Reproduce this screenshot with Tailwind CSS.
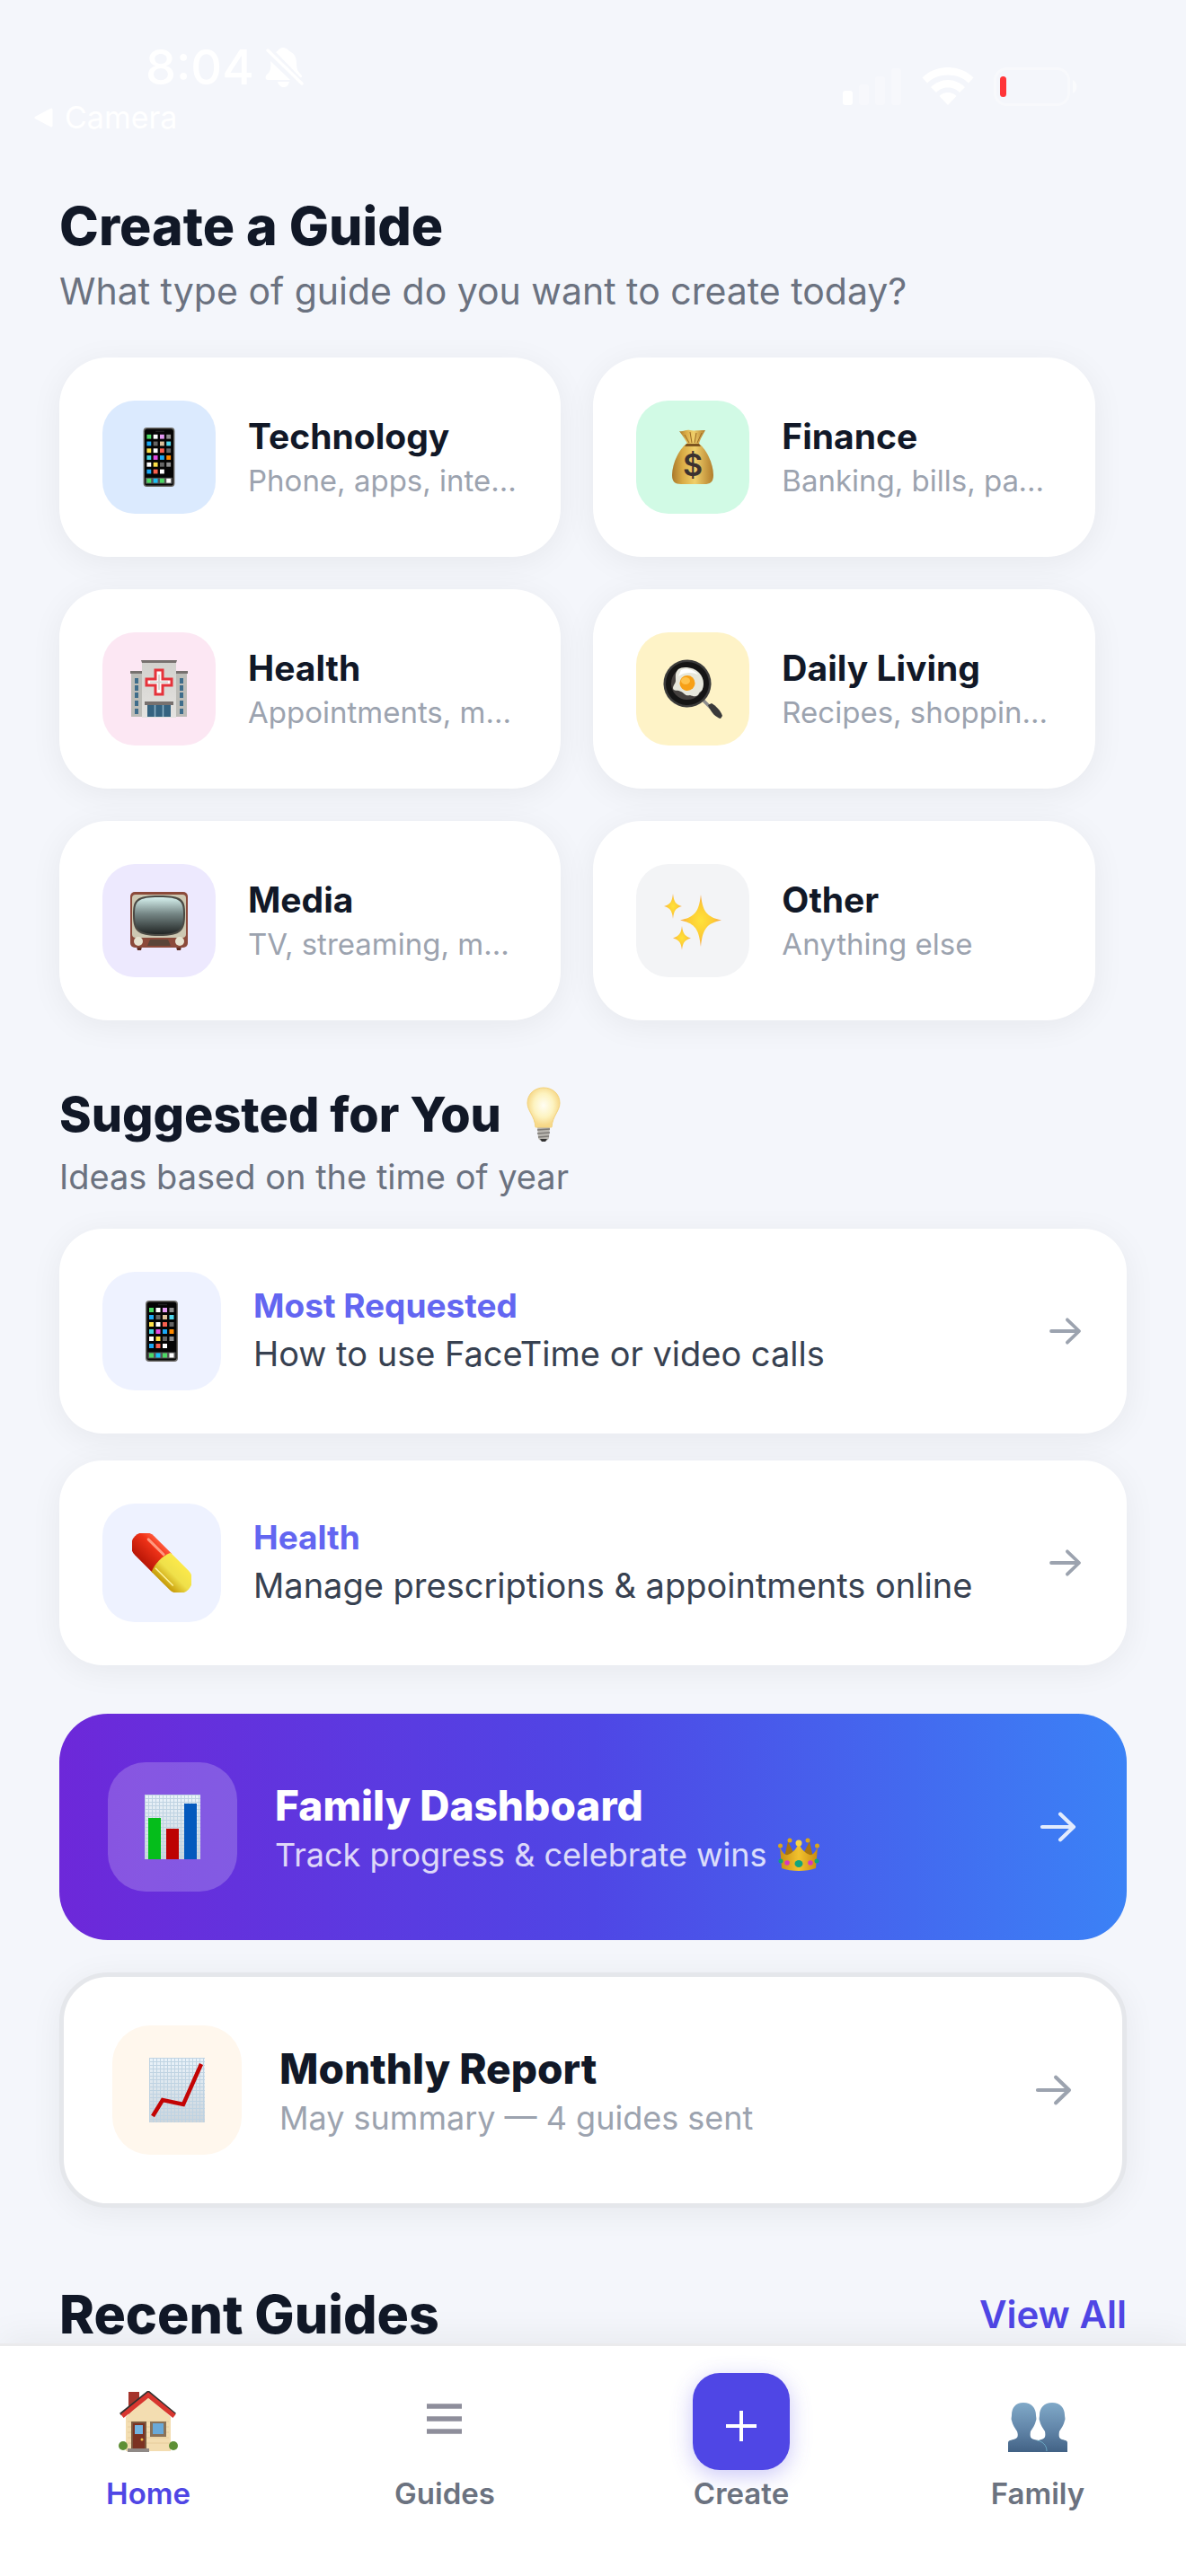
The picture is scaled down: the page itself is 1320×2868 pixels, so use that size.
<!DOCTYPE html>
<html lang="en">
<head>
<meta charset="utf-8">
<meta name="viewport" content="width=device-width, initial-scale=1">
<title>Create a Guide</title>
<script src="https://cdn.jsdelivr.net/npm/@tailwindcss/browser@4"></script>
</head>
<body class="flex min-h-screen flex-col bg-[#f4f6fb] font-['Inter',sans-serif] text-[#111827]">

<!-- Shared icons -->
<svg class="absolute size-0" aria-hidden="true">
  <defs>
    <linearGradient id="gold" x1="0" x2="1"><stop offset="0" stop-color="#a9782a"/><stop offset=".25" stop-color="#d9ab45"/><stop offset=".55" stop-color="#f0cf6a"/><stop offset="1" stop-color="#b27d2b"/></linearGradient>
    <linearGradient id="wall" x1="0" x2="0" y1="0" y2="1"><stop offset="0" stop-color="#d2d1cd"/><stop offset="1" stop-color="#e4e3e0"/></linearGradient>
    <linearGradient id="tube" x1="0" x2="0" y1="0" y2="1"><stop offset="0" stop-color="#d6f1ee"/><stop offset=".45" stop-color="#758685"/><stop offset="1" stop-color="#222625"/></linearGradient>
    <radialGradient id="star"><stop offset="0" stop-color="#ffe23a"/><stop offset=".6" stop-color="#fdcb35"/><stop offset="1" stop-color="#f7a34a"/></radialGradient>
    <linearGradient id="pillred" x1="0" x2="0" y1="0" y2="1"><stop offset="0" stop-color="#ff5a3c"/><stop offset=".3" stop-color="#ef3218"/><stop offset="1" stop-color="#b81606"/></linearGradient>
    <linearGradient id="pillyellow" x1="0" x2="0" y1="0" y2="1"><stop offset="0" stop-color="#fbe94a"/><stop offset=".5" stop-color="#efe04a"/><stop offset="1" stop-color="#c79a08"/></linearGradient>
    <linearGradient id="paper" x1="0" x2="0" y1="0" y2="1"><stop offset="0" stop-color="#eaf3fa"/><stop offset="1" stop-color="#ccd5dc"/></linearGradient>
    <pattern id="grid" width="4" height="4" patternUnits="userSpaceOnUse"><path d="M0 .5h4M.5 0v4" stroke="#bfd3e2" stroke-width="1"/></pattern>
    <linearGradient id="people" x1="0" x2="0" y1="0" y2="1"><stop offset="0" stop-color="#80a9c8"/><stop offset=".5" stop-color="#6488ab"/><stop offset="1" stop-color="#426285"/></linearGradient>
    <radialGradient id="glow" cx=".5" cy=".45"><stop offset="0" stop-color="#fffef4"/><stop offset=".6" stop-color="#fdf3c0"/><stop offset="1" stop-color="#f7d98a"/></radialGradient>
    <linearGradient id="crown" x1="0" x2="1"><stop offset="0" stop-color="#c98f12"/><stop offset=".5" stop-color="#f2c22e"/><stop offset="1" stop-color="#c98a10"/></linearGradient>
  </defs>
  <symbol id="phone" viewBox="0 0 36 68">
    <rect width="36" height="68" rx="4" fill="#6b6965"/><rect x="1.500" y="1.500" width="33" height="65" rx="3" fill="#050505"/>
    <path d="M14 4.500h10" stroke="#222" stroke-width="1.500"/>
    <g><path fill="#4cd964" d="M4 8h5v5H4z"/><path fill="#fff" d="M11.500 8h5v5h-5z"/><path fill="#e59bf5" d="M19 8h5v5h-5z"/><path fill="#8e8e8e" d="M26.500 8h5v5h-5z"/>
    <path fill="#1ba8f5" d="M4 16h5v5H4z"/><path fill="#666" d="M11.500 16h5v5h-5z"/><path fill="#dcc09a" d="M19 16h5v5h-5z"/><path fill="#50d6ea" d="M26.500 16h5v5h-5z"/>
    <path fill="#fde047" d="M4 24h5v5H4z"/><path fill="#fff" d="M11.500 24h5v5h-5z"/><path fill="#f8604f" d="M19 24h5v5h-5z"/><path fill="#666" d="M26.500 24h5v5h-5z"/>
    <path fill="#42d3df" d="M4 32h5v5H4z"/><path fill="#e34be0" d="M11.500 32h5v5h-5z"/><path fill="#1ba8f5" d="M19 32h5v5h-5z"/><path fill="#ff8a00" d="M26.500 32h5v5h-5z"/>
    <path fill="#fff" d="M4 40h5v5H4z"/><path fill="#fde047" d="M11.500 40h5v5h-5z"/><path fill="#666" d="M19 40h5v5h-5z"/><path fill="#8e8e8e" d="M26.500 40h5v5h-5z"/>
    <path fill="#1ba8f5" d="M4 48h5v5H4z"/><path fill="#f8604f" d="M11.500 48h5v5h-5z"/><path fill="#fff" d="M19 48h5v5h-5z"/></g>
    <path d="M2.500 57.500h31v7h-31z" fill="#555"/>
    <path fill="#4cd964" d="M4 58.500h5v5H4z"/><path fill="#1bc0f5" d="M11.500 58.500h5v5h-5z"/><path fill="#4cd964" d="M19 58.500h5v5h-5z"/><path fill="#fff" d="M26.500 58.500h5v5h-5z"/>
  </symbol>
  <symbol id="arrow" viewBox="0 0 40 34">
    <path d="M3 17h32M22 3.500 36 17 22 30.500" fill="none" stroke="currentColor" stroke-width="4" stroke-linecap="round" stroke-linejoin="round"/>
  </symbol>
</svg>

<!-- Status bar -->
<header class="flex h-[216px] items-start justify-between text-white">
  <div>
    <div class="mt-[44px] ml-[162px] flex items-center gap-[12px]">
      <span class="text-[54px] leading-[62px] font-medium">8:04</span>
      <svg class="h-[46px] w-[44px]" viewBox="0 0 44 46" aria-label="Silent mode"><path d="M12 6c3-1 3-5 8-5s6 4 9 5c5 3 6 8 6 13 0 6 2 9 5 12 2 2 1 4-1 3z" fill="#fff"/><path d="M6 16 28 37H3c-3 0-3-4-1-6 4-3 5-8 4-15zM14 39h13c-1 4-3 6-6 6s-6-2-7-6z" fill="#fff"/><path d="M3 4l38 37" stroke="#fff" stroke-width="3.500" stroke-linecap="round"/></svg>
    </div>
    <a href="#camera" class="mt-[4px] ml-[38px] flex items-center gap-[12px] text-[34px] leading-[42px]">
      <svg class="h-[22px] w-[22px]" viewBox="0 0 22 22" aria-hidden="true"><path d="M19 2v18L2 11z" fill="#fff" stroke="#fff" stroke-width="3" stroke-linejoin="round"/></svg>
      Camera
    </a>
  </div>
  <div class="mt-[74px] mr-[120px] flex items-center gap-[22px]">
    <svg class="h-[44px] w-[66px]" viewBox="0 0 66 44" aria-label="Signal, one bar"><g fill="#fff"><rect y="27" width="11" height="16" rx="3"/><g opacity=".3"><rect x="18" y="20" width="11" height="23" rx="3"/><rect x="36" y="11" width="11" height="32" rx="3"/><rect x="54" y="2" width="11" height="41" rx="3"/></g></g></svg>
    <svg class="h-[44px] w-[58px]" viewBox="0 0 58 44" aria-label="Wi-Fi"><g fill="#fff"><path d="M29 1c11 0 21 4 28.500 11.500L52 18.500C46 12.500 38 9.500 29 9.500S12 12.500 6 18.500L.5 12.500C8 5 18 1 29 1z"/><path d="M29 15c7 0 14 3 19 8l-6 6c-4-4-8-5.500-13-5.500S20 25 16 29l-6-6c5-5 12-8 19-8z"/><path d="M29 29c4 0 7 1.500 9.500 4L29 43l-9.500-10c2.500-2.500 5.500-4 9.500-4z"/></g></svg>
    <svg class="h-[44px] w-[94px]" viewBox="0 0 94 44" aria-label="Battery low"><rect x="1.500" y="2.500" width="82" height="40" rx="13" fill="none" stroke="#fff" stroke-opacity=".4" stroke-width="3"/><path d="M88 15c6 2 6 13 0 15z" fill="#fff" fill-opacity=".5"/><rect x="7" y="11" width="7" height="23" rx="3.500" fill="#ff3538"/></svg>
  </div>
</header>

<main class="flex flex-1 flex-col px-[66px]">
  <h1 class="text-[59px] leading-[72px] font-extrabold">Create a Guide</h1>
  <p class="mt-[8px] text-[41px] leading-[56px] text-[#6b7280]">What type of guide do you want to create today?</p>

  <div class="mt-[46px] grid grid-cols-[47%_47%] gap-[36px]">
    <a href="#technology" class="flex items-center gap-[36px] rounded-[54px] bg-white p-[48px] shadow-[0_6px_36px_rgba(0,0,0,0.06)]">
      <span class="flex size-[126px] shrink-0 items-center justify-center rounded-[36px] bg-[#dbeafe]"><svg class="h-[66px] w-[36px]" aria-hidden="true"><use href="#phone"/></svg></span>
      <span class="flex min-w-0 flex-col gap-[4px]"><span class="text-[39px] leading-[48px] font-bold">Technology</span><span class="truncate text-[33px] leading-[42px] text-[#9ca3af]">Phone, apps, internet</span></span>
    </a>
    <a href="#finance" class="flex items-center gap-[36px] rounded-[54px] bg-white p-[48px] shadow-[0_6px_36px_rgba(0,0,0,0.06)]">
      <span class="flex size-[126px] shrink-0 items-center justify-center rounded-[36px] bg-[#d1fae5]">
        <svg class="size-[66px]" viewBox="0 0 66 66" aria-hidden="true"><path d="M18 4c5 1 7-2 12-1s8 0 17 0c-2 4-5 8-7 15H27c-3-6-6-10-9-14z" fill="url(#gold)"/><path d="m24 8 5 9M30 5l2 12M37 6l-2 11M43 6l-5 11" stroke="#9b6a24" stroke-width="1"/><path d="M26 18h14c8 6 16 22 16 35 0 8-4 10-10 10H20c-7 0-10-3-10-10 0-13 8-29 16-35z" fill="url(#gold)"/><path d="M26 18h14l2 3H24z" fill="#7d5520"/><text x="33" y="54" text-anchor="middle" font-size="34" font-weight="600" fill="#3b3230" font-family="Inter">$</text></svg>
      </span>
      <span class="flex min-w-0 flex-col gap-[4px]"><span class="text-[39px] leading-[48px] font-bold">Finance</span><span class="truncate text-[33px] leading-[42px] text-[#9ca3af]">Banking, bills, payments</span></span>
    </a>
    <a href="#health" class="flex items-center gap-[36px] rounded-[54px] bg-white p-[48px] shadow-[0_6px_36px_rgba(0,0,0,0.06)]">
      <span class="flex size-[126px] shrink-0 items-center justify-center rounded-[36px] bg-[#fce7f3]">
        <svg class="size-[66px]" viewBox="0 0 66 66" aria-hidden="true"><path d="M2 15h14v49H2zM50 15h14v49H50z" fill="#bcbcb7"/><path d="M1 13h15v3H1zM50 13h15v3H50z" fill="#77716f"/><path d="M14 3h38v62H14z" fill="url(#wall)"/><path d="M13 1h40l-1 3H14z" fill="#77716f"/><g fill="#3f6d8b"><path d="M6 21h4v6H6zM6 29h4v6H6zM6 37h4v6H6zM6 46h4v6H6zM6 55h4v6H6zM56 21h4v6h-4zM56 29h4v6h-4zM56 37h4v6h-4zM56 46h4v6h-4zM56 55h4v6h-4z"/></g><path d="M29 12h8v10h10v7H37v10h-8V29H19v-7h10z" fill="#fff" stroke="#e5333b" stroke-width="3"/><path d="M33 17v17M23 25.500h20" stroke="#d8d6d2" stroke-width="2"/><path d="M17 47h32v4H17z" fill="#77716f"/><path d="M20 51h26v13H20z" fill="#356380"/><path d="M28.500 51v13M37.500 51v13" stroke="#8fb3c8" stroke-width="1.500"/></svg>
      </span>
      <span class="flex min-w-0 flex-col gap-[4px]"><span class="text-[39px] leading-[48px] font-bold">Health</span><span class="truncate text-[33px] leading-[42px] text-[#9ca3af]">Appointments, medicines</span></span>
    </a>
    <a href="#daily" class="flex items-center gap-[36px] rounded-[54px] bg-white p-[48px] shadow-[0_6px_36px_rgba(0,0,0,0.06)]">
      <span class="flex size-[126px] shrink-0 items-center justify-center rounded-[36px] bg-[#fef3c7]">
        <svg class="size-[66px]" viewBox="0 0 66 66" aria-hidden="true"><path d="m45 46 8 8" stroke="#8c8c8c" stroke-width="3.500"/><path d="m50 51 4-2c5 3 10 8 12 14l-2 3c-5-1-11-7-14-15z" fill="#3a3a3a"/><circle cx="27" cy="27" r="26.500" fill="#3b3b3b"/><circle cx="27" cy="27" r="24" fill="#151515"/><circle cx="27" cy="27" r="18" fill="#45413f"/><path d="M17 11c5-4 18-2 23 4 5 5 6 12 4 18-1 3-3 3-4 5-2 5-7 3-10 2-6 1-6-2-10-4-3-2-9 0-9-4 0-3 3-5 3-8 0-5-1-9 3-13z" fill="#e6e7dc"/><path d="M20 12c6-3 15 0 19 5-7-3-15-3-22 2z" fill="#fff"/><circle cx="27" cy="26.500" r="8.500" fill="#f7a017"/><ellipse cx="25" cy="24" rx="5" ry="4" fill="#ffc34d"/></svg>
      </span>
      <span class="flex min-w-0 flex-col gap-[4px]"><span class="text-[39px] leading-[48px] font-bold">Daily Living</span><span class="truncate text-[33px] leading-[42px] text-[#9ca3af]">Recipes, shopping, home</span></span>
    </a>
    <a href="#media" class="flex items-center gap-[36px] rounded-[54px] bg-white p-[48px] shadow-[0_6px_36px_rgba(0,0,0,0.06)]">
      <span class="flex size-[126px] shrink-0 items-center justify-center rounded-[36px] bg-[#ede9fe]">
        <svg class="size-[66px]" viewBox="0 0 66 66" aria-hidden="true"><path d="M8 62h6l-1 4H9zM52 62h6l-1 4h-4z" fill="#5f2c20"/><rect x="1" y="1" width="64" height="62" rx="5" fill="#8b4a3a"/><rect x="3" y="4" width="60" height="48" rx="4" fill="#cdc8b2"/><path d="M33 5c26 0 29 4 29 21 0 18-4 24-29 24S4 44 4 26C4 9 8 5 33 5z" fill="#4b4a44"/><path d="M33 7c24 0 27 4 27 19 0 17-4 22-27 22S6 43 6 26C6 11 9 7 33 7z" fill="url(#tube)"/><path d="M23 54h20l3 7H20z" fill="#5a4538"/><circle cx="10" cy="56" r="5" fill="#e6e2cf"/><circle cx="56" cy="56" r="5" fill="#e6e2cf"/></svg>
      </span>
      <span class="flex min-w-0 flex-col gap-[4px]"><span class="text-[39px] leading-[48px] font-bold">Media</span><span class="truncate text-[33px] leading-[42px] text-[#9ca3af]">TV, streaming, music</span></span>
    </a>
    <a href="#other" class="flex items-center gap-[36px] rounded-[54px] bg-white p-[48px] shadow-[0_6px_36px_rgba(0,0,0,0.06)]">
      <span class="flex size-[126px] shrink-0 items-center justify-center rounded-[36px] bg-[#f3f4f6]">
        <svg class="size-[66px]" viewBox="0 0 66 66" aria-hidden="true"><g fill="url(#star)"><path d="M42 4c2 18 6 25 23 28.500C48 36 44 43 42 62c-2-19-6-26-23-29.500C36 29 40 22 42 4z"/><path d="M11 3c1 9 3 12 10 14-7 2-9 5-10 14-1-9-3-12-10-14 7-2 9-5 10-14z"/><path d="M21 39c1 8 3 11 10 13.500-7 2-9 5-10 13-1-8-3-11-10-13C18 50 20 47 21 39z"/></g></svg>
      </span>
      <span class="flex min-w-0 flex-col gap-[4px]"><span class="text-[39px] leading-[48px] font-bold">Other</span><span class="truncate text-[33px] leading-[42px] text-[#9ca3af]">Anything else</span></span>
    </a>
  </div>

  <h2 class="mt-[72px] flex items-center gap-[28px] text-[54px] leading-[66px] font-extrabold">Suggested for You
    <svg class="h-[62px] w-[38px]" viewBox="0 0 38 62" aria-hidden="true"><path d="M12 44h14l-1 13c-2 5-10 5-12 0z" fill="#b9b6b0"/><path d="M12 48l14-1M12 52l14-1M13 56l12-1" stroke="#7d7a76" stroke-width="1.500"/><path d="M15 58h8l-2 3h-4z" fill="#333"/><path d="M19 1c10 0 18 7 18 17 0 9-8 14-9 27H10C9 32 1 27 1 18 1 8 9 1 19 1z" fill="url(#glow)" stroke="#f3d27c" stroke-width="1"/></svg>
  </h2>
  <p class="mt-[12px] text-[38px] leading-[48px] text-[#6b7280]">Ideas based on the time of year</p>

  <div class="mt-[34px] flex flex-col gap-[30px]">
    <a href="#facetime" class="flex items-center gap-[36px] rounded-[48px] bg-white p-[48px] shadow-[0_6px_36px_rgba(0,0,0,0.06)]">
      <span class="flex size-[132px] shrink-0 items-center justify-center rounded-[36px] bg-[#eef2ff]"><svg class="h-[68px] w-[36px]" aria-hidden="true"><use href="#phone"/></svg></span>
      <span class="flex min-w-0 flex-1 flex-col gap-[2px]"><span class="text-[37px] leading-[48px] font-bold text-[#6366f1]">Most Requested</span><span class="text-[38px] leading-[54px] text-[#374151]">How to use FaceTime or video calls</span></span>
      <svg class="h-[32px] w-[40px] text-[#9ca3af]" aria-hidden="true"><use href="#arrow"/></svg>
    </a>
    <a href="#prescriptions" class="flex items-center gap-[36px] rounded-[48px] bg-white p-[48px] shadow-[0_6px_36px_rgba(0,0,0,0.06)]">
      <span class="flex size-[132px] shrink-0 items-center justify-center rounded-[36px] bg-[#eef2ff]">
        <svg class="size-[66px]" viewBox="0 0 66 66" aria-hidden="true"><g transform="rotate(45 33 33)"><path d="M34 18H6a15 15 0 0 0 0 30H34z" fill="url(#pillred)"/><path d="M32 18h28a15 15 0 0 1 0 30H32c-4-9-4-21 0-30z" fill="url(#pillyellow)"/><path d="M4 25h24" stroke="#ff9a80" stroke-width="3" stroke-linecap="round"/><path d="M32 42h28" stroke="#fff6a0" stroke-width="1.500"/></g></svg>
      </span>
      <span class="flex min-w-0 flex-1 flex-col gap-[2px]"><span class="text-[37px] leading-[48px] font-bold text-[#6366f1]">Health</span><span class="text-[38px] leading-[54px] text-[#374151]">Manage prescriptions &amp; appointments online</span></span>
      <svg class="h-[32px] w-[40px] text-[#9ca3af]" aria-hidden="true"><use href="#arrow"/></svg>
    </a>
  </div>

  <a href="#dashboard" class="mt-[54px] flex items-center gap-[42px] rounded-[54px] bg-linear-[90deg,#6d28d9,#4f46e5_50%,#3b82f6] p-[54px] text-white">
    <span class="flex size-[144px] shrink-0 items-center justify-center rounded-[42px] bg-white/20">
      <svg class="h-[72px] w-[62px]" viewBox="0 0 62 72" aria-hidden="true"><path d="M0 0h62v72H0z" fill="url(#paper)"/><path d="M0 0h62v72H0z" fill="url(#grid)"/><path d="M4 26h14v46H4z" fill="#05bd1b"/><path d="M24 38h14v34H24z" fill="#bd0202"/><path d="M44 10h14v62H44z" fill="#0459bd"/></svg>
    </span>
    <span class="flex min-w-0 flex-1 flex-col gap-px">
      <span class="text-[46px] leading-[60px] font-extrabold">Family Dashboard</span>
      <span class="flex items-center gap-[12px] text-[36px] leading-[48px] text-white/80">Track progress &amp; celebrate wins
        <svg class="h-[38px] w-[46px]" viewBox="0 0 46 38" aria-hidden="true"><path d="M11 4 7 22h32L35 4l-6 12H17z" fill="#a8740e"/><path d="M2 10c3 8 7 11 11 8 4-2 8-6 10-13 2 7 6 11 10 13 4 3 8 0 11-8l-2 24c-10 4-28 4-38 0z" fill="url(#crown)"/><g fill="#d9a51c"><circle cx="13" cy="3" r="2.500"/><circle cx="33" cy="3" r="2.500"/><circle cx="2.500" cy="9" r="2.500"/><circle cx="43.500" cy="9" r="2.500"/><circle cx="23" cy="6" r="3.500" fill="#f6d444"/></g><g fill="#10a57c"><ellipse cx="23" cy="29" rx="4.500" ry="4"/><circle cx="3" cy="26" r="2.500"/><circle cx="43" cy="26" r="2.500"/></g><g fill="#d63ac0"><circle cx="10" cy="28" r="2.800"/><circle cx="36" cy="28" r="2.800"/></g></svg>
      </span>
    </span>
    <svg class="h-[36px] w-[44px] text-white/85" aria-hidden="true"><use href="#arrow"/></svg>
  </a>

  <a href="#report" class="mt-[36px] flex items-center gap-[42px] rounded-[54px] border-5 border-[#e5e7eb] bg-white p-[54px] shadow-[0_6px_36px_rgba(0,0,0,0.06)]">
    <span class="flex size-[144px] shrink-0 items-center justify-center rounded-[42px] bg-[#fff7ed]">
      <svg class="h-[72px] w-[62px]" viewBox="0 0 62 72" aria-hidden="true"><path d="M0 0h62v72H0z" fill="url(#paper)"/><path d="M0 0h62v72H0z" fill="url(#grid)"/><path d="m4 65 11-18 23 5L58 7" fill="none" stroke="#c30404" stroke-width="4.500"/></svg>
    </span>
    <span class="flex min-w-0 flex-1 flex-col gap-px">
      <span class="text-[46px] leading-[60px] font-extrabold">Monthly Report</span>
      <span class="text-[36px] leading-[48px] text-[#9ca3af]">May summary — 4 guides sent</span>
    </span>
    <svg class="h-[36px] w-[44px] text-[#9ca3af]" aria-hidden="true"><use href="#arrow"/></svg>
  </a>

  <div class="mt-[89px] flex items-center justify-between">
    <h2 class="text-[59px] leading-[60px] font-extrabold">Recent Guides</h2>
    <a href="#all" class="text-[42px] leading-[60px] font-semibold text-[#4f46e5]">View All</a>
  </div>
</main>

<!-- Tab bar -->
<nav class="sticky bottom-0 grid grid-cols-4 border-t-3 border-[#ebebed] bg-white pt-[30px] pb-[72px] text-center text-[33px] leading-[40px] font-semibold text-[#6b7280] shadow-[0_-8px_36px_rgba(0,0,0,0.05)]">
  <a href="#home" class="flex flex-col items-center gap-[6px] text-[#4f46e5]">
    <span class="flex size-[108px] items-center justify-center">
      <svg class="h-[68px] w-[66px]" viewBox="0 0 66 68" aria-hidden="true"><path d="M11 1h12v22l-12 3z" fill="#a5342c"/><path d="M33 4 8 29v38h50V29z" fill="#f3ddb1"/><path d="M10 40h46M10 34h46M10 46h46M10 52h46M10 58h46" stroke="#e6cc9b" stroke-width="1"/><path d="M2 26 33 1l30 25" fill="none" stroke="#33302f" stroke-width="3"/><path d="M4 28 33 4.500 62 28" fill="none" stroke="#d8362f" stroke-width="5"/><path d="M14 34h17v31H14z" fill="#7c5a40"/><path d="M16 36h13v29H16z" fill="#7b3222"/><path d="M18 38h9v10h-9z" fill="#72b4e2"/><path d="M35 34h18v17H35z" fill="#8a7258"/><path d="M38 36h12v12H38z" fill="#6aa9d8"/><path d="M10 64h24v4H10z" fill="#8f8986"/><circle cx="5" cy="61" r="5" fill="#5d8f35"/><circle cx="61" cy="61" r="5" fill="#5d8f35"/><circle cx="26" cy="54" r="1.500" fill="#f1c24a"/></svg>
    </span>Home
  </a>
  <a href="#guides" class="flex flex-col items-center gap-[6px]">
    <span class="flex size-[108px] items-center justify-center">
      <svg class="h-[42px] w-[40px]" viewBox="0 0 40 42" aria-hidden="true"><path d="M0 4h39M0 18h39M0 32h39" stroke="#8e8e9b" stroke-width="5.500"/></svg>
    </span>Guides
  </a>
  <a href="#create" class="flex flex-col items-center gap-[6px]">
    <span class="flex size-[108px] items-center justify-center rounded-[30px] bg-[#4f46e5] shadow-[0_6px_24px_rgba(79,70,229,0.3)]">
      <svg class="h-[46px] w-[34px]" viewBox="0 0 34 46" aria-hidden="true"><path d="M17 11v34M0 28h34" stroke="#fff" stroke-width="4"/></svg>
    </span>Create
  </a>
  <a href="#family" class="flex flex-col items-center gap-[6px]">
    <span class="flex size-[108px] items-center justify-center">
      <svg class="h-[68px] w-[66px]" viewBox="0 0 66 68" aria-hidden="true"><g fill="url(#people)"><path d="M49 13c9 0 14 6 14 14 0 2 1 4 0 6-1 5-4 9-6 12-1 6 0 8 3 9 4 1 6 1 6 4v10H31V58c0-3 3-3 6-4 4-1 5-3 4-9-2-3-5-7-6-12-1-2 0-4 0-6 0-8 5-14 14-14z"/><path d="M17 13c9 0 14 6 14 14 0 2 1 4 0 6-1 5-4 9-6 12-1 6 0 8 4 9 9 2 14 4 14 14H0V58c0-3 2-3 6-4s6-3 4-9c-2-3-5-7-6-12-1-2 0-4 0-6 0-8 4-14 13-14z"/></g><path d="M32 55c6 1 11 5 11 12" fill="none" stroke="#6ba9c5" stroke-width="1"/></svg>
    </span>Family
  </a>
</nav>
</body>
</html>
